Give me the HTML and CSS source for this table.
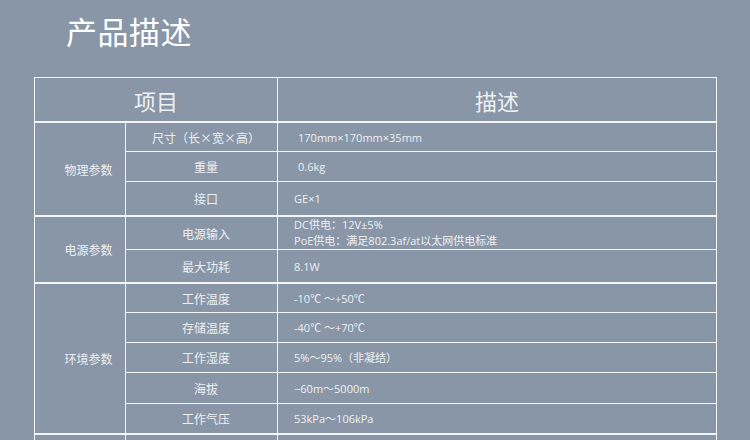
FILE: index.html
```html
<!DOCTYPE html>
<html lang="zh-CN">
<head>
<meta charset="utf-8">
<title>产品描述</title>
<link rel="stylesheet" href="styles.css">
</head>
<body>
<div class="page">
  <h1 class="title">产品描述</h1>
  <table class="spec">
    <colgroup>
      <col class="c1"><col class="c2"><col class="c3">
    </colgroup>
    <thead>
      <tr class="head">
        <th colspan="2">项目</th>
        <th>描述</th>
      </tr>
    </thead>
    <tbody>
      <tr class="h29">
        <td class="cat" rowspan="3">物理参数</td>
        <td class="item">尺寸（长×宽×高）</td>
        <td class="val ind">170mm×170mm×35mm</td>
      </tr>
      <tr class="h30">
        <td class="item">重量</td>
        <td class="val ind">0.6kg</td>
      </tr>
      <tr class="h34">
        <td class="item">接口</td>
        <td class="val">GE×1</td>
      </tr>
      <tr class="h33 grp">
        <td class="cat" rowspan="2">电源参数</td>
        <td class="item">电源输入</td>
        <td class="val two">DC供电：12V±5%<br>PoE供电：满足802.3af/at以太网供电标准</td>
      </tr>
      <tr class="h33">
        <td class="item">最大功耗</td>
        <td class="val">8.1W</td>
      </tr>
      <tr class="h29 grp">
        <td class="cat" rowspan="5">环境参数</td>
        <td class="item">工作温度</td>
        <td class="val">-10℃ ～+50℃</td>
      </tr>
      <tr class="h30">
        <td class="item">存储温度</td>
        <td class="val">-40℃ ～+70℃</td>
      </tr>
      <tr class="h30">
        <td class="item">工作湿度</td>
        <td class="val">5%～95%（非凝结）</td>
      </tr>
      <tr class="h31">
        <td class="item">海拔</td>
        <td class="val">−60m～5000m</td>
      </tr>
      <tr class="h30">
        <td class="item">工作气压</td>
        <td class="val">53kPa～106kPa</td>
      </tr>
      <tr class="h30 grp">
        <td class="cat"></td>
        <td class="item"></td>
        <td class="val"></td>
      </tr>
    </tbody>
  </table>
</div>
</body>
</html>
```

FILE: styles.css
```css
html, body {
  margin: 0;
  padding: 0;
  width: 750px;
  height: 440px;
  overflow: hidden;
  background: #8896a7;
}

.page {
  padding: 11px 0 0 34px;
  font-family: "Open Sans", "Noto Sans CJK SC", sans-serif;
  color: #eef1f4;
}

.title {
  margin: 0 0 0 32px;
  font-family: "Noto Sans CJK SC", sans-serif;
  font-weight: 400;
  font-size: 31px;
  line-height: 40px;
  color: #ffffff;
  letter-spacing: 0.5px;
}

.spec {
  margin-top: 26px;
  border-collapse: collapse;
  table-layout: fixed;
  width: 682px;
}

.c1 { width: 91px; }
.c2 { width: 152px; }
.c3 { width: 439px; }

.spec th,
.spec td {
  border: 1px solid #f4f6f8;
  padding: 0;
}

.head th {
  height: 43px;
  font-family: "Noto Sans CJK SC", sans-serif;
  font-weight: 400;
  font-size: 22px;
  color: #eef1f4;
  text-align: center;
  border-bottom-width: 2px;
}

.cat,
.item {
  font-family: "Noto Sans CJK SC", sans-serif;
  font-size: 12px;
  text-align: center;
  color: #edf0f3;
}

.spec .cat { padding-left: 17px; }
.spec .item { padding-left: 9px; }

.val {
  font-size: 11px;
  text-align: left;
  color: #eef1f4;
  line-height: 15px;
}

.spec .val { padding-left: 16px; }
.spec .val.ind { padding-left: 20px; }

.val.two { line-height: 16px; }

.grp td { border-top-width: 2px; }

.h29 td { height: 28px; }
.h30 td { height: 29px; }
.h31 td { height: 30px; }
.h33 td { height: 32px; }
.h34 td { height: 33px; }
.h35 td { height: 34px; }
```
